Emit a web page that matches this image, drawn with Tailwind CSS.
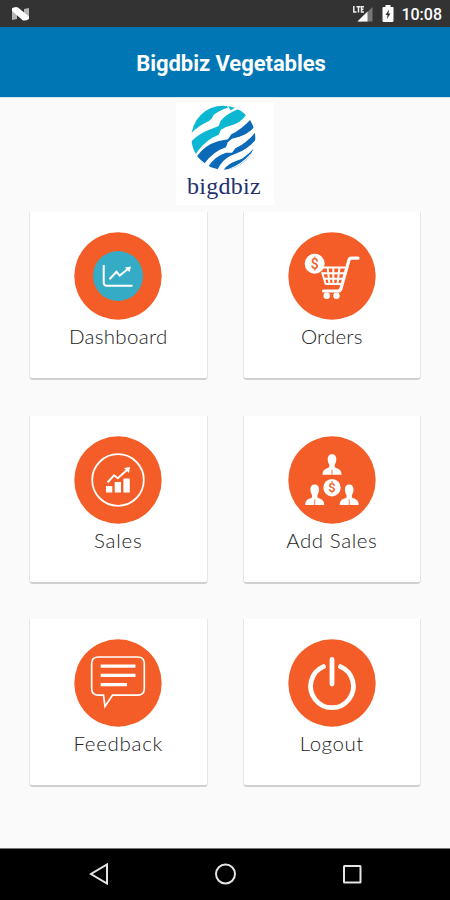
<!DOCTYPE html>
<html lang="en">
<head>
    <meta charset="UTF-8">
    <meta name="viewport" content="width=device-width, initial-scale=1.0">
    <title>Bigdbiz Vegetables</title>
    <script src="https://cdn.jsdelivr.net/npm/@tailwindcss/browser@4"></script>
</head>

<body class="flex flex-col w-[450px] h-[900px] overflow-hidden bg-[#fafafa] font-['Roboto',sans-serif]">

    <!-- Status bar -->
    <div class="flex items-center h-[27px] shrink-0 bg-[#333333] pl-3 pr-2 text-white">
        <svg class="w-[17px] h-[14px]" viewBox="0 0 17 14">
            <path d="M0 1 5 0V12L0 13ZM12 2 17 1V12L12 13Z" fill="#b5b5b5"/>
            <path d="M0 1.500Q3-.5 6 .5L17 9.500V12Q14 14 11 13.500L0 4Z" fill="#fff"/>
        </svg>
        <svg class="ml-auto mr-px w-5 h-[17px]" viewBox="0 0 20 17">
            <path d="M19.500 2V16.500H4.500Z" fill="#777"/>
            <path d="M14.500 6.500V16.500H4.500Z" fill="#fff"/>
            <path d="M.8 1V7H3.500M3.500 1.700H7.500M5.500 1.700V7.500M11 1.700H8.500V7H11M8.500 4.300H10.500" fill="none" stroke="#eee" stroke-width="1.500"/>
        </svg>
        <svg class="ml-2 w-3 h-[17px]" viewBox="0 0 12 17">
            <path d="M3.500 0H8.500V2H11Q11.500 2 11.500 3V16Q11.500 17 10.500 17H1.500Q.5 17 .5 16V3Q.5 2 1.500 2H3.500Z" fill="#fff"/>
            <path d="M7 4.500 3.500 10H5.500L5 14 8.500 8.500H6.500Z" fill="#333"/>
        </svg>
        <span class="ml-[7px] mt-0.5 text-[16px] leading-none font-medium">10:08</span>
    </div>

    <!-- Toolbar -->
    <header class="flex items-center justify-center h-[70px] shrink-0 bg-[#0077b4] pl-3 pt-[3px]">
        <h1 class="text-[22px] leading-none font-bold text-white tracking-[-0.05px]">Bigdbiz Vegetables</h1>
    </header>

    <main class="flex flex-col grow items-center border-t border-[#d5e8f2]">
        <!-- Logo -->
        <div class="flex flex-col items-center w-[98px] h-[103px] mt-1 pr-[2px] bg-white">
            <svg class="w-[72px] h-[72px] shrink-0" viewBox="0 0 216 216">
                <clipPath id="globe"><circle cx="106" cy="107" r="96"/></clipPath>
                <g clip-path="url(#globe)">
                    <path d="M0 104Q28 72 62 58L72 49 76 40Q90 26 120 17L110 0H0Z" fill="#0cb7d3"/>
                    <path d="M120 12 146 14 128 25Z" fill="#0cb7d3"/>
                    <path d="M0 130Q25 98 62 84L92 72 98 56Q118 34 150 22L176 34Q168 54 142 66L112 76 98 84 92 98Q56 112 30 146L14 172Z" fill="#0cb7d3"/>
                    <path d="M26 164Q48 130 92 117L120 112 130 97Q160 82 190 50L200 74Q180 96 154 104L132 110 119 121 114 136Q76 148 50 184Z" fill="#0b6ab8"/>
                    <path d="M60 194Q84 160 114 152L132 152 142 139Q178 122 208 84V108Q180 142 148 153L128 161Q100 174 86 208Z" fill="#0b6ab8"/>
                    <path d="M102 212Q114 186 146 176L162 170Q184 156 204 132V210Z" fill="#0b6ab8"/>
                    <path d="M122 203Q160 190 190 156" fill="none" stroke="#fff" stroke-width="4"/>
                </g>
            </svg>
            <span class="mt-[-2px] font-['Liberation_Serif',serif] text-[24px] leading-[28px] tracking-[0.3px] text-[#26306e]">bigdbiz</span>
        </div>

        <!-- Menu cards -->
        <div class="grid grid-cols-2 gap-x-[35px] gap-y-[35.5px] w-[392px] mt-[7px]">
            <a class="flex flex-col items-center h-[168px] pt-5 bg-white rounded-b-sm border-x border-b-2 border-x-[#e6e6e6] border-b-[#d0d0d0]">
                <svg class="w-[88px] h-[88px] shrink-0" viewBox="0 0 88 88" fill="none" stroke="#fff">
                    <circle cx="44" cy="44" r="43.700" fill="#f45d27" stroke="none"/>
                    <circle cx="44" cy="44" r="25" fill="#36abc5" stroke="none"/>
                    <path d="M29.700 33V50.500Q29.700 53.700 33 53.700H58.500" stroke-width="2"/>
                    <path d="M35.500 47.300 42.400 39.800 45.700 43.600 54.500 36.500" stroke-width="2"/>
                    <path d="M51 35.500 57 34.500 55.500 40Z" fill="#fff" stroke="none"/>
                </svg>
                <span class="mt-0.5 font-['Lato',sans-serif] font-light text-[20.5px] leading-7 tracking-[0.3px] text-[#222]">Dashboard</span>
            </a>

            <a class="flex flex-col items-center h-[168px] pt-5 bg-white rounded-b-sm border-x border-b-2 border-x-[#e6e6e6] border-b-[#d0d0d0]">
                <svg class="w-[88px] h-[88px] shrink-0" viewBox="0 0 88 88" fill="none" stroke="#fff">
                    <circle cx="44" cy="44" r="43.700" fill="#f45d27" stroke="none"/>
                    <path d="M70 26.200H63.500Q61.500 26.200 60.800 28.500L53 56.500Q52.300 59 50 59H35.500" stroke-width="3.200" stroke-linecap="round"/>
                    <path d="M35 35.600H57M34 41.300H56M36 46.700H55M37.500 52H53" stroke-width="2"/>
                    <path d="M34 40 37.800 52.500M39.500 35 41.500 52M45.300 35V52M51.500 35 49.500 52" stroke-width="2"/>
                    <circle cx="26.700" cy="31.700" r="10" fill="#fff" stroke="none"/>
                    <circle cx="38.700" cy="63.700" r="3.200" fill="#fff" stroke="none"/>
                    <circle cx="48.500" cy="63.700" r="3.200" fill="#fff" stroke="none"/>
                    <text x="26.700" y="36.800" text-anchor="middle" class="font-['Roboto',sans-serif] text-[14px] font-medium" fill="#f45d27" stroke="none">$</text>
                </svg>
                <span class="mt-0.5 font-['Lato',sans-serif] font-light text-[20.5px] leading-7 tracking-[0.2px] text-[#222]">Orders</span>
            </a>

            <a class="flex flex-col items-center h-[168px] pt-5 bg-white rounded-b-sm border-x border-b-2 border-x-[#e6e6e6] border-b-[#d0d0d0]">
                <svg class="w-[88px] h-[88px] shrink-0" viewBox="0 0 88 88" fill="none" stroke="#fff">
                    <circle cx="44" cy="44" r="43.700" fill="#f45d27" stroke="none"/>
                    <circle cx="44" cy="44" r="25.800" stroke-width="1.800"/>
                    <path d="M32 50H38.300V56.500H32ZM40.700 46H47V56.500H40.700ZM49.400 42.500H55.800V56.500H49.400Z" fill="#fff" stroke="none"/>
                    <path d="M33.500 46.500 40 39.300 43.800 42.200 53.500 33.500" stroke-width="2"/>
                    <path d="M50 32 56 31 55 37Z" fill="#fff" stroke="none"/>
                </svg>
                <span class="mt-0.5 font-['Lato',sans-serif] font-light text-[20.5px] leading-7 tracking-[0.8px] text-[#222]">Sales</span>
            </a>

            <a class="flex flex-col items-center h-[168px] pt-5 bg-white rounded-b-sm border-x border-b-2 border-x-[#e6e6e6] border-b-[#d0d0d0]">
                <svg class="w-[88px] h-[88px] shrink-0" viewBox="0 0 88 88" fill="#fff">
                    <defs>
                        <g id="person">
                            <path d="M0 0C3 0 4.500 2 4.300 5.500 4.200 8 3.200 9.500 2.700 10.500V13L7 15Q9.500 16.500 9.500 20.500H-9.500Q-9.500 16.500-7 15L-2.700 13V10.500C-3.200 9.500-4.200 8-4.300 5.500-4.500 2-3 0 0 0Z"/>
                            <path d="M0 15V20.500" stroke="#f45d27" stroke-width=".8"/>
                        </g>
                    </defs>
                    <circle cx="44" cy="44" r="43.700" fill="#f45d27"/>
                    <use href="#person" x="44" y="18.300"/>
                    <use href="#person" x="26.700" y="48.500"/>
                    <use href="#person" x="61.200" y="48.500"/>
                    <circle cx="44" cy="51.700" r="8.700"/>
                    <text x="44" y="56.300" text-anchor="middle" class="font-['Roboto',sans-serif] text-[13px] font-medium" fill="#f45d27">$</text>
                </svg>
                <span class="mt-0.5 font-['Lato',sans-serif] font-light text-[20.5px] leading-7 tracking-[0.55px] text-[#222]">Add Sales</span>
            </a>

            <a class="flex flex-col items-center h-[168px] pt-5 bg-white rounded-b-sm border-x border-b-2 border-x-[#e6e6e6] border-b-[#d0d0d0]">
                <svg class="w-[88px] h-[88px] shrink-0" viewBox="0 0 88 88" fill="none" stroke="#fff">
                    <circle cx="44" cy="44" r="43.700" fill="#f45d27" stroke="none"/>
                    <path d="M24.500 18H63.500Q70.300 18 70.300 24.500V49.500Q70.300 56.200 63.500 56.200H38.500L31 67.500 29.500 56.200H24.500Q17.700 56.200 17.700 49.500V24.500Q17.700 18 24.500 18Z" stroke-width="1.700"/>
                    <path d="M26.700 27.200H61.500M26.700 36.400H61.500M26.700 45.600H53" stroke-width="3.300"/>
                </svg>
                <span class="mt-0.5 font-['Lato',sans-serif] font-light text-[20.5px] leading-7 tracking-[0.7px] text-[#222]">Feedback</span>
            </a>

            <a class="flex flex-col items-center h-[168px] pt-5 bg-white rounded-b-sm border-x border-b-2 border-x-[#e6e6e6] border-b-[#d0d0d0]">
                <svg class="w-[88px] h-[88px] shrink-0" viewBox="0 0 88 88" fill="none" stroke="#fff">
                    <circle cx="44" cy="44" r="43.700" fill="#f45d27" stroke="none"/>
                    <path d="M35.500 27.600A21.400 21.400 0 1 0 52.500 27.600M44 20.500V45" stroke-width="4.800" stroke-linecap="round"/>
                </svg>
                <span class="mt-0.5 font-['Lato',sans-serif] font-light text-[20.5px] leading-7 tracking-[0.5px] text-[#222]">Logout</span>
            </a>
        </div>
    </main>

    <!-- Navigation bar -->
    <nav class="flex items-center justify-between h-[52px] shrink-0 bg-black border-t border-[#777] pl-[89px] pr-[87px] pb-px">
        <svg class="w-[22px] h-[22px]" viewBox="0 0 22 22" fill="none" stroke="#e4e4e4" stroke-width="2">
            <path d="M18 1.500V20.500L2 11Z"/>
        </svg>
        <svg class="w-[22px] h-[22px]" viewBox="0 0 22 22" fill="none" stroke="#e4e4e4" stroke-width="2">
            <circle cx="10.500" cy="11" r="9.500"/>
        </svg>
        <svg class="w-[22px] h-[22px]" viewBox="0 0 22 22" fill="none" stroke="#e4e4e4" stroke-width="2">
            <rect x="3" y="3" width="16.500" height="16.500" rx=".5"/>
        </svg>
    </nav>

</body>
</html>
